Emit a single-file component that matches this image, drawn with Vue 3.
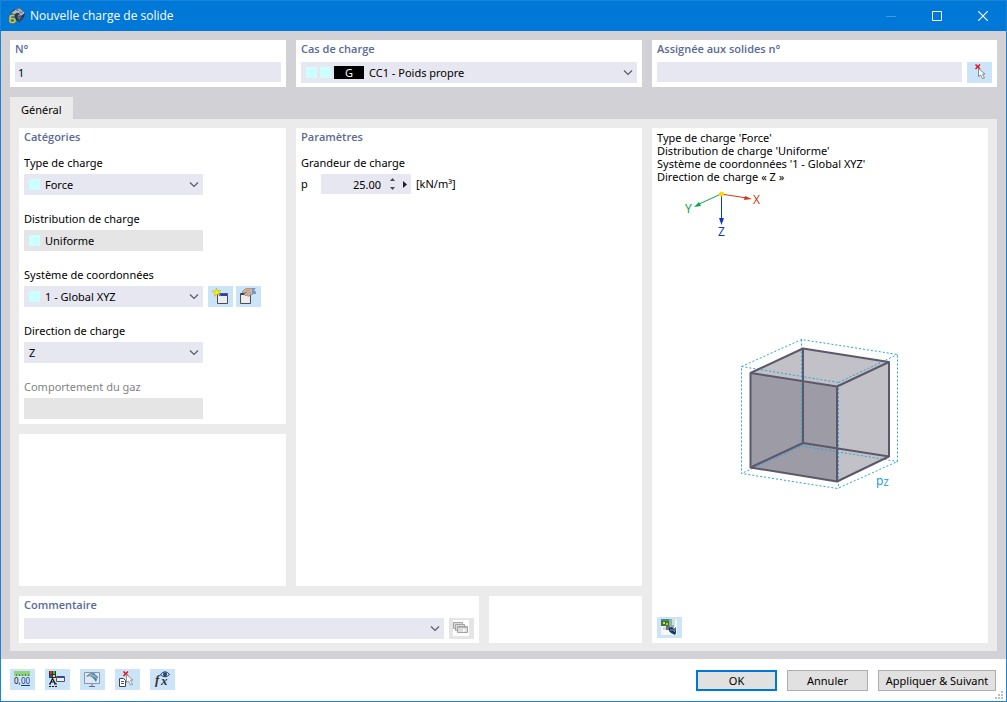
<script setup>
import { ref } from 'vue'

const number = ref('1')
const assigned = ref('')
const loadCase = ref('CC1 - Poids propre')
const loadType = ref('Force')
const distribution = ref('Uniforme')
const system = ref('1 - Global XYZ')
const direction = ref('Z')
const magnitude = ref('25.00')
const comment = ref('')
</script>

<template>
  <div class="window">
    <header class="titlebar">
      <svg class="app-icon" width="16" height="16" viewBox="0 0 16 16" aria-hidden="true">
        <path d="M1 5L6 1L11 0L16 5L15 9L11 14L7 12L5 6Z" fill="#26344c" />
        <path d="M6 1L11 0L16 5L12 8L9 4Z" fill="#74849a" />
        <path d="M2 5L6 2L9 4L5 6Z" fill="#a9b4c1" />
        <path d="M6 2L13 7M9 1L15 5M5 6L12 2M9 8L15 5" stroke="#c8d2dd" stroke-width=".8" fill="none" />
        <path d="M9 6L11 13M13 7L9 11M8 9L13 10" stroke="#6d7e96" stroke-width=".8" />
        <path d="M5.500 7.500H3Q1 7.500 1 10V13Q1 14.500 3.500 14.500Q6 14.500 6 12.500Q6 10.500 3.500 10.500H1.500" fill="none" stroke="#f2b90c" stroke-width="1.700" />
      </svg>
      <h1>Nouvelle charge de solide</h1>
      <button class="win-btn dim" aria-label="Réduire" disabled>
        <svg width="10" height="10" viewBox="0 0 10 10"><path d="M0 5.500H10" stroke="#3f9ae2" /></svg>
      </button>
      <button class="win-btn" aria-label="Agrandir">
        <svg width="10" height="10" viewBox="0 0 10 10"><path d="M.5 .5H9.500V9.500H.5Z" fill="none" stroke="#fff" /></svg>
      </button>
      <button class="win-btn" aria-label="Fermer">
        <svg width="10" height="10" viewBox="0 0 10 10"><path d="M0 0L10 10M10 0L0 10" stroke="#fff" stroke-width="1.200" /></svg>
      </button>
    </header>

    <main class="body">
      <div class="top-row">
        <section class="card">
          <label class="heading" for="no">N°</label>
          <div class="field short"><input id="no" v-model="number" /></div>
        </section>
        <section class="card">
          <label class="heading" for="case">Cas de charge</label>
          <div class="field">
            <span class="swatch"></span><span class="swatch near"></span><span class="tag">G</span>
            <select id="case" v-model="loadCase"><option>CC1 - Poids propre</option></select>
            <svg class="chevron" width="10" height="6" viewBox="0 0 10 6"><path d="M1 .5L5 4.500L9 .5" /></svg>
          </div>
        </section>
        <section class="card">
          <label class="heading" for="solids">Assignée aux solides n°</label>
          <div class="line">
            <div class="field short grow"><input id="solids" v-model="assigned" /></div>
            <button class="icon-btn" aria-label="Sélectionner">
              <svg width="16" height="16" viewBox="0 0 16 16">
                <path d="M4.500 .5L9 5M9 .5L4.500 5" stroke="#e3141c" stroke-width="1.500" />
                <path d="M7.500 4.500V12.500L9.500 11L11.500 14.500L13.500 14L11.500 10H14Z" fill="#fff" stroke="#8b8a90" />
              </svg>
            </button>
          </div>
        </section>
      </div>

      <nav class="tabs"><button class="tab">Général</button></nav>

      <div class="page">
        <div class="left">
          <div class="upper">
            <div class="stack">
              <section class="card">
                <h2 class="heading">Catégories</h2>
                <div class="groups">
                  <div class="group">
                    <label for="type">Type de charge</label>
                    <div class="field">
                      <span class="swatch"></span>
                      <select id="type" v-model="loadType"><option>Force</option></select>
                      <svg class="chevron" width="10" height="6" viewBox="0 0 10 6"><path d="M1 .5L5 4.500L9 .5" /></svg>
                    </div>
                  </div>
                  <div class="group">
                    <label for="dist">Distribution de charge</label>
                    <div class="field off">
                      <span class="swatch"></span>
                      <input id="dist" v-model="distribution" readonly />
                    </div>
                  </div>
                  <div class="group">
                    <label for="sys">Système de coordonnées</label>
                    <div class="line">
                      <div class="field">
                        <span class="swatch"></span>
                        <select id="sys" v-model="system"><option>1 - Global XYZ</option></select>
                        <svg class="chevron" width="10" height="6" viewBox="0 0 10 6"><path d="M1 .5L5 4.500L9 .5" /></svg>
                      </div>
                      <div class="pair">
                        <button class="icon-btn" aria-label="Nouveau système">
                          <svg width="16" height="16" viewBox="0 0 16 16">
                            <path d="M5.500 6.500H15.500V15.500H5.500Z" fill="#ededf0" stroke="#4c4c4c" />
                            <path d="M7 5H16V6H7Z" fill="#5a5a5a" /><path d="M7 6H15V8H7Z" fill="#1f3fd0" />
                            <path d="M4.500 0L5.500 3L9 2.500L6.500 4.500L8.500 7.500L5 6L2.500 8.500L3 5L0 3L3.500 3Z" fill="#fff200" stroke="#b5a90c" stroke-width=".5" />
                          </svg>
                        </button>
                        <button class="icon-btn" aria-label="Modifier le système">
                          <svg width="16" height="16" viewBox="0 0 16 16">
                            <path d="M.5 5.500H10.500V15.500H.5Z" fill="#ededf0" stroke="#4c4c4c" />
                            <path d="M1 5H6V7H1Z" fill="#2b3f87" />
                            <path d="M2 4L5 1L11 0L13 2V6L10 7L8 8.500L7 7L5 7.500L4 6L7 4L3 5Z" fill="#d9b79c" stroke="#8d7565" stroke-width=".7" />
                            <path d="M6 3L10 2M7 6L11 4" stroke="#a58872" stroke-width=".7" />
                            <path d="M12 0H16L14 2L16 4V6H12Z" fill="#7595cf" />
                          </svg>
                        </button>
                      </div>
                    </div>
                  </div>
                  <div class="group">
                    <label for="dir">Direction de charge</label>
                    <div class="field">
                      <select id="dir" v-model="direction"><option>Z</option></select>
                      <svg class="chevron" width="10" height="6" viewBox="0 0 10 6"><path d="M1 .5L5 4.500L9 .5" /></svg>
                    </div>
                  </div>
                  <div class="group muted">
                    <label for="gas">Comportement du gaz</label>
                    <div class="field off"><input id="gas" disabled /></div>
                  </div>
                </div>
              </section>
              <section class="card fill"></section>
            </div>

            <section class="card">
              <h2 class="heading">Paramètres</h2>
              <div class="groups">
                <div class="group">
                  <label for="mag">Grandeur de charge</label>
                  <div class="magnitude">
                    <span class="symbol">p</span>
                    <div class="field short number">
                      <input id="mag" v-model="magnitude" />
                      <span class="spin">
                        <button aria-label="Augmenter"><svg width="5" height="3" viewBox="0 0 5 3"><path d="M0 3L2.500 0L5 3Z" fill="#4a4a4a" /></svg></button>
                        <button aria-label="Diminuer"><svg width="5" height="3" viewBox="0 0 5 3"><path d="M0 0L2.500 3L5 0Z" fill="#4a4a4a" /></svg></button>
                      </span>
                      <button class="more" aria-label="Options"><svg width="4" height="7" viewBox="0 0 4 7"><path d="M0 0L4 3.500L0 7Z" fill="#222" /></svg></button>
                    </div>
                    <span>[kN/m³]</span>
                  </div>
                </div>
              </div>
            </section>
          </div>

          <div class="lower">
            <section class="card">
              <label class="heading" for="comment">Commentaire</label>
              <div class="line">
                <div class="field grow">
                  <select id="comment" v-model="comment"><option></option></select>
                  <svg class="chevron" width="10" height="6" viewBox="0 0 10 6"><path d="M1 .5L5 4.500L9 .5" /></svg>
                </div>
                <button class="icon-btn off" aria-label="Commentaires" disabled>
                  <svg width="16" height="16" viewBox="0 0 16 16">
                    <path d="M0 0H16V16H0Z" fill="#fff" />
                    <g fill="#dcdcdc" stroke="#a3a3a3">
                      <path d="M.5 2.500H9.500V8.500H.5Z" /><path d="M2.500 4.500H11.500V10.500H2.500Z" /><path d="M4.500 6.500H14.500V12.500H4.500Z" />
                    </g>
                    <path d="M5 7H14V8H5Z" fill="#b9b9b9" /><path d="M10 8.500L13 10L10 12Z" fill="#fff" />
                  </svg>
                </button>
              </div>
            </section>
            <section class="card"></section>
          </div>
        </div>

        <section class="card preview">
          <p>Type de charge 'Force'<br />Distribution de charge 'Uniforme'<br />Système de coordonnées '1 - Global XYZ'<br />Direction de charge « Z »</p>
          <svg class="axes" width="120" height="59" viewBox="657 183 120 59">
            <path d="M721 194L697 205" stroke="#0aa34a" /><path d="M694 207L699 202L701 206Z" fill="#0aa34a" />
            <path d="M721 194L747 198" stroke="#cf3a12" /><path d="M752 199L745 196L744 200Z" fill="#cf3a12" />
            <path d="M721.500 194V220" stroke="#0b37c9" /><path d="M721.500 225L719 218H724Z" fill="#0b37c9" />
            <circle cx="721.500" cy="194" r="2.500" fill="#ffd800" />
            <text x="685" y="213" fill="#0aa34a">Y</text>
            <text x="753" y="204" fill="#cf3a12">X</text>
            <text x="718" y="236" fill="#0b37c9">Z</text>
          </svg>
          <div class="scene">
            <svg width="160" height="156" viewBox="740 336 160 156">
              <path d="M750.500 373L803 348.500L889 362V456L837 481.500L750.500 467.500Z" fill="#c2c1c7" />
              <path d="M750.500 373L837 386.500V481.500L750.500 467.500Z" fill="#9c9ba6" />
              <g class="load">
                <path d="M741.500 366.500L801.500 339.500L897.500 354.500V461.500L837.500 488.500L741.500 473.500Z" />
                <path d="M741.500 366.500L838.500 382.500V488.500M838.500 382.500L897.500 354.500M801.500 339.500V446L741.500 473.500M801.500 446L897.500 461.500" />
              </g>
              <g class="edges">
                <path d="M750.500 373L803 348.500L889 362V456.500L837 481.500L750.500 467.500Z" />
                <path d="M750.500 373L837 386.500V481.500M837 386.500L889 362M803 348.500V443L750.500 467.500M803 443L889 456.500" />
              </g>
              <text x="876" y="485" fill="#1a9ad6">p<tspan class="sub" dy="1">Z</tspan></text>
            </svg>
          </div>
          <button class="icon-btn" aria-label="Image">
            <svg width="16" height="16" viewBox="0 0 16 16">
              <path d="M0 0H16V16H0Z" fill="#f3f7fa" />
              <path d="M0 0H8V7H0Z" fill="#3b7a35" /><path d="M0 0H8V2H0Z" fill="#3f8a96" />
              <path d="M2 3H4V5H2Z" fill="#f2d61b" /><path d="M5 4H7V6H5Z" fill="#b4c92c" />
              <path d="M8 0H11V8H8Z" fill="#8fb29f" /><path d="M11 0H14V7H11Z" fill="#cfe0d8" />
              <path d="M2 8H6V11H2Z" fill="#d3d9de" /><path d="M5 7H9V11H5Z" fill="#69757c" /><path d="M9 6H13V9H9Z" fill="#98abba" />
              <path d="M8 9L11 8L13 10L15 8V14L14 16L10 14L8 12Z" fill="#1d3558" />
              <path d="M9 11H12L14 13M14 9V12" stroke="#6f9bd2" fill="none" />
            </svg>
          </button>
        </section>
      </div>
    </main>

    <footer class="footer">
      <button class="icon-btn" aria-label="Unités">
        <svg width="16" height="16" viewBox="0 0 16 16">
          <path d="M0 0H16V5H0Z" fill="#8fd47c" /><path d="M2.500 3V5M5.500 3V5M8.500 3V5M11.500 3V5M14.500 3V5" stroke="#4d9248" />
          <text class="digits" x="0" y="13">0,</text><text class="digits blue" x="7" y="13">00</text>
          <path d="M7 14.500H16" stroke="#1b3a8a" />
        </svg>
      </button>
      <button class="icon-btn" aria-label="Affichage">
        <svg width="16" height="16" viewBox="0 0 16 16">
          <path d="M0 0H7V7H0Z" fill="#333" /><path d="M1 0H3V3H1Z" fill="#f22" /><path d="M4 0H6V3H4Z" fill="#2c4" /><path d="M1 4H3V6H1Z" fill="#2455f0" /><path d="M4 4H6V6H4Z" fill="#fd0" />
          <path d="M1 13L3.500 7.500L6.500 13M2 11H6M0 13H2M5 13H8" fill="none" stroke="#111" stroke-width="1.200" /><path d="M0 15.500H8" stroke="#111" stroke-dasharray="2 1" />
          <path d="M7.500 5.500H15.500V10.500H7.500Z" fill="#f1eded" stroke="#555" /><path d="M8 5H15V7H8Z" fill="#2448b5" />
        </svg>
      </button>
      <button class="icon-btn" aria-label="Vue">
        <svg width="16" height="16" viewBox="0 0 16 16">
          <path d="M.5 1.500H15.500V12.500H.5Z" fill="#dcebf7" stroke="#8d969e" />
          <path d="M2 6Q6 1 10 2L14 6L12 11L9 7L6 5Z" fill="#4e7fa5" /><path d="M4 4Q9 3 13 8M6 3Q10 4 13 7M8 6L12 4M6 5L9 2" stroke="#a2c1d6" fill="none" stroke-width=".7" />
          <path d="M8 13V15M5 15.500H11" stroke="#65707c" />
        </svg>
      </button>
      <button class="icon-btn" aria-label="Sélection">
        <svg width="16" height="16" viewBox="0 0 16 16">
          <path d="M4.500 .5L9 5M9 .5L4.500 5" stroke="#e3141c" stroke-width="1.500" />
          <path d="M.5 7.500H4.500L6.500 9.500V15.500H.5Z" fill="#fff" stroke="#444" /><path d="M2 10.500H5M2 12.500H5" stroke="#555" />
          <path d="M7.500 3.500V11.500L9.500 10L11.500 14L13.500 13.500L11.500 9H14Z" fill="#fff" stroke="#96959b" />
        </svg>
      </button>
      <button class="icon-btn" aria-label="Formule">
        <svg width="16" height="16" viewBox="0 0 16 16">
          <text class="formula" x="1" y="13">f</text><text class="formula" x="7" y="14">x</text>
          <path d="M6.500 3.500Q11 -2 15.500 3.500Q11 8 6.500 3.500Z" fill="#dce4f2" stroke="#26335f" /><circle cx="11" cy="3.200" r="2" fill="#25407f" />
        </svg>
      </button>
      <div class="actions">
        <button class="push primary">OK</button>
        <button class="push">Annuler</button>
        <button class="push wide">Appliquer &amp; Suivant</button>
      </div>
      <svg class="grip" width="8" height="8" viewBox="0 0 8 8" aria-hidden="true">
        <path d="M6 0H8V2H6ZM3 3H5V5H3ZM6 3H8V5H6ZM0 6H2V8H0ZM3 6H5V8H3ZM6 6H8V8H6Z" fill="#bfbfbf" />
      </svg>
    </footer>
  </div>
</template>

<style>
html, body { margin: 0; }
</style>

<style scoped>
.window {
  box-sizing: border-box;
  min-height: 100vh;
  display: flex;
  flex-direction: column;
  border: 1px solid #1883d7;
  background: #d2d1d6;
  color: #000;
  font: 11px/18px "Noto Sans", "Open Sans", sans-serif;
}
* { box-sizing: border-box; }
button, input, select { font: inherit; color: inherit; border: 0; margin: 0; padding: 0; background: none; border-radius: 0; }
svg { display: block; flex: none; }
.titlebar { display: flex; align-items: center; height: 30px; padding-left: 8px; background: #0078d7; color: #fff; }
.titlebar h1 { flex: 1; margin: 0 0 0 5px; font: 400 12px/18px "Open Sans", "Noto Sans", sans-serif; }
.win-btn { width: 46px; height: 30px; display: flex; align-items: center; justify-content: center; }
.body { flex: 1; display: flex; flex-direction: column; padding: 9px 9px 8px; }
.top-row { display: grid; grid-template-columns: 276fr 346fr 345fr; gap: 10px; }
.card { min-width: 0; min-height: 47px; padding: 0 5px 4px; background: #fff; }
.heading { display: block; margin: 0; font: 600 11px/18px "Open Sans", "Noto Sans", sans-serif; color: #5a6a94; }
.top-row .heading, .lower .heading { margin-bottom: 4px; }
.field { position: relative; display: flex; align-items: center; height: 21px; padding-left: 5px; background: #e7e7f2; }
.field.short { height: 20px; padding-left: 3px; }
.field.off { background: #e5e5e5; }
.field input, .field select { flex: 1; min-width: 0; width: 100%; height: 100%; appearance: none; outline: none; }
.swatch { width: 11px; height: 11px; margin-right: 5px; background: #ccffff; }
.swatch.near { margin: 0 3px 0 -2px; }
.tag { width: 30px; margin-right: 5px; background: #000; color: #fff; line-height: 13px; text-align: center; }
.chevron { position: absolute; right: 4px; top: 8px; pointer-events: none; fill: none; stroke: #5c5c60; stroke-width: 1.2; }
.line { display: flex; gap: 5px; }
.grow { flex: 1; }
.pair { display: flex; gap: 3px; }
.icon-btn { flex: none; width: 25px; height: 21px; padding: 2px 0 0 4px; display: flex; align-items: flex-start; background: #cce4f7; }
.icon-btn.off { background: #e5e5e5; }
.tabs { display: flex; margin-top: 10px; }
.tab { height: 22px; padding: 3px 11px 0; background: #ebebeb; }
.page { flex: 1; display: grid; grid-template-columns: 623fr 336fr; gap: 10px; padding: 9px 9px 8px; background: #ebebeb; }
.left { display: flex; flex-direction: column; gap: 10px; min-width: 0; }
.upper { flex: 1; display: grid; grid-template-columns: 267fr 346fr; gap: 10px; }
.lower { display: grid; grid-template-columns: 460fr 153fr; gap: 10px; }
.stack { display: flex; flex-direction: column; gap: 10px; min-width: 0; }
.stack .card { padding-bottom: 5px; }
.fill { flex: 1; }
.groups { display: flex; flex-direction: column; gap: 15px; margin-top: 8px; }
.group { display: flex; flex-direction: column; gap: 2px; }
.group .field { width: 179px; }
.muted label { color: #838383; }
.magnitude { display: flex; align-items: center; gap: 5px; }
.symbol { width: 15px; }
.group .number { width: 90px; }
.number input { text-align: right; }
.spin { display: flex; flex-direction: column; gap: 6px; margin: 0 8px 0 9px; }
.spin button { height: 3px; }
.more { margin-right: 4px; }
.preview { display: flex; flex-direction: column; padding: 3px 5px 5px; }
.preview p { margin: 0; line-height: 13px; }
.axes text, .scene text { font-size: 12px; }
.scene text .sub { font-size: 9px; }
.scene { flex: 1; display: flex; align-items: center; justify-content: center; padding-bottom: 31px; }
.load { fill: none; stroke: #2ba3dc; stroke-dasharray: 2 2; }
.edges { fill: none; stroke: #5b5969; stroke-width: 2; stroke-linejoin: round; }
.footer { position: relative; display: flex; align-items: flex-start; gap: 10px; height: 42px; padding: 10px 10px 0 9px; background: #fff; }
.actions { display: flex; gap: 10px; margin: 1px 0 0 auto; }
.push { width: 81px; height: 21px; border: 1px solid #adadad; background: #e1e1e1; }
.push.primary { border: 2px solid #0078d7; }
.push.wide { width: 118px; }
.grip { position: absolute; right: 3px; bottom: 2px; }
.digits { font: 8px "Noto Sans", sans-serif; fill: #111; }
.blue { fill: #1b3a8a; }
.formula { font: italic bold 13px "Liberation Serif", serif; fill: #333; }
</style>
